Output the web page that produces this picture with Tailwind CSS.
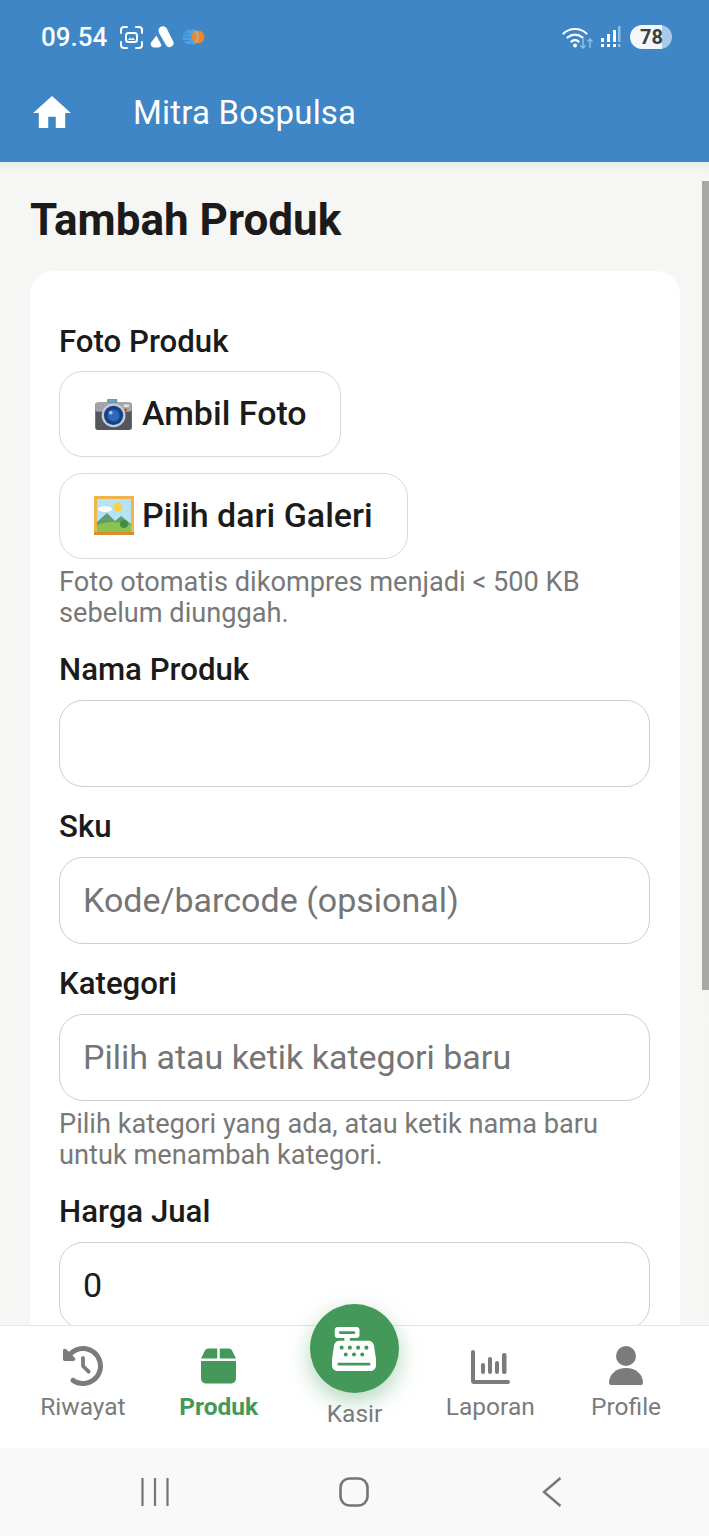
<!doctype html>
<html lang="id">
<head>
<meta charset="utf-8">
<script src="https://cdn.jsdelivr.net/npm/@tailwindcss/browser@4"></script>
<title>Tambah Produk</title>
</head>
<body class="m-0">
<div class="relative flex h-[1536px] w-[709px] flex-col overflow-hidden bg-[#f6f6f5] font-['Roboto',sans-serif] text-[#1b1b1b]">

  <!-- status + app bar -->
  <header class="h-[162px] shrink-0 bg-[#3e86c6] text-white">
    <div class="flex h-[74px] items-center justify-between pl-[41px] pr-[37px]">
      <div class="flex items-center">
        <span class="text-[26px] font-medium leading-none">09.54</span>
        <svg class="ml-[12px]" width="25" height="25" viewBox="0 0 25 25" fill="none" stroke="#fff" stroke-width="2" stroke-linecap="round"><path d="M2 8V5a3 3 0 0 1 3-3h3M17 2h3a3 3 0 0 1 3 3v3M23 17v3a3 3 0 0 1-3 3h-3M8 23H5a3 3 0 0 1-3-3v-3"/><rect x="7" y="8" width="11" height="9" rx="2.500" stroke-width="2"/><path d="M9 15l2-2.500 1.500 1.500 1.500-1.500 2 2.500z" fill="#fff" stroke="none"/></svg>
        <svg class="ml-[6px]" width="24" height="22" viewBox="0 0 24 22"><path d="M8.500 4.500a4.500 4.500 0 0 1 8-2.500l6.500 13a4 4 0 0 1-7 4l-7-12z" fill="#fff"/><path d="M6.500 9.500l5 9.500A3.500 3.500 0 0 1 8 21.500H4A3.500 3.500 0 0 1 1 16.500z" fill="#fff"/></svg>
        <svg class="ml-[8px]" width="23" height="16" viewBox="0 0 23 16"><circle cx="8" cy="8" r="7.500" fill="#4aa0e6"/><path d="M0 4.500h7M0 8h9M0 11.500h7" stroke="#3e86c6" stroke-width="1"/><circle cx="16" cy="8" r="6.500" fill="#e98a2b"/><path d="M10.500.8a8 8 0 0 1 0 14.400l1.500 0a8 8 0 0 0 0-14.400z" fill="#8fbde3"/></svg>
      </div>
      <div class="flex items-center">
        <svg width="31" height="24" viewBox="0 0 31 24" fill="none"><path d="M1.500 8.500a17 17 0 0 1 23 0M5.500 12.500a11.500 11.500 0 0 1 15 0M9.500 16.500a6 6 0 0 1 7 0" stroke="#fff" stroke-width="2.200" stroke-linecap="round"/><circle cx="13" cy="20.500" r="2" fill="#fff"/><path d="M21 14v9M18.500 20.500l2.500 2.500 2.500-2.500M28 23v-9M25.500 16.500l2.500-2.500 2.500 2.500" stroke="#8fbde3" stroke-width="1.500"/></svg>
        <svg class="ml-[7px]" width="21" height="24" viewBox="0 0 21 24" fill="#fff"><rect x="1" y="19" width="3" height="3"/><rect x="1" y="13" width="3" height="4"/><rect x="7" y="19" width="3" height="3"/><rect x="7" y="9" width="3" height="8"/><rect x="13" y="19" width="3" height="3"/><rect x="13" y="5" width="3" height="12"/><rect x="18" y="1" width="2.500" height="16" fill="#8fbde3"/><rect x="18" y="19" width="2.500" height="3" fill="#8fbde3"/></svg>
        <div class="relative ml-[9px] flex h-[24px] w-[42px] items-center overflow-hidden rounded-full bg-[#a9cbe8]">
          <div class="absolute inset-y-0 left-0 w-[32px] rounded-l-full bg-[#f3f6fa]"></div>
          <span class="relative pl-[10px] text-[20px] font-bold leading-none text-[#3a3f47]">78</span>
        </div>
      </div>
    </div>
    <div class="flex h-[76px] items-center pl-[33px]">
      <svg width="38" height="38" viewBox="2 2.500 20 18" fill="#fff" class="h-[34px] w-[38px]"><path d="M10 20v-6h4v6h5v-8h3L12 3 2 12h3v8z"/></svg>
      <span class="ml-[62px] text-[33px] leading-none tracking-[0.2px]">Mitra Bospulsa</span>
    </div>
  </header>

  <!-- scrollable content -->
  <main class="flex-1 overflow-hidden bg-gradient-to-b from-[#ececea] from-0% to-[#f6f6f5] to-[1%] pl-[30px] pr-[29px]">
    <h1 class="mt-[34px] text-[44px] font-bold leading-[48px]">Tambah Produk</h1>
    <section class="mt-[27px] rounded-[24px] bg-white pb-[40px] pl-[29px] pr-[30px] pt-[53px]">
      <label class="block text-[31.200px] font-medium leading-[35px]">Foto Produk</label>
      <button class="mt-[12px] flex h-[86px] w-[282px] items-center rounded-[24px] border border-[#d9d9d9] bg-white pb-[2px] pl-[33px] text-[34px] font-medium leading-none">
        <svg width="40" height="33" viewBox="0 0 41 36" class="mb-[-2px] ml-[1px] mr-[8px] shrink-0"><rect x="13" y="1" width="11" height="5" rx="1" fill="#7d8a96"/><rect x="15" y="2" width="7" height="2" fill="#4fb3e8"/><rect x="0" y="5" width="40" height="30" rx="3" fill="#55555c"/><rect x="0" y="5" width="40" height="10" rx="3" fill="#a3a3aa"/><rect x="31" y="7" width="6" height="3" fill="#dfe3e6"/><circle cx="33" cy="13" r="1.500" fill="#d33"/><circle cx="20" cy="19" r="13" fill="#c3ccd4"/><circle cx="20" cy="19" r="10.500" fill="#15428a"/><circle cx="20" cy="19" r="6.500" fill="#2d69b5"/><circle cx="17" cy="16" r="2" fill="#9cc4ef"/></svg>
        Ambil Foto
      </button>
      <button class="mt-[16px] flex h-[86px] w-[349px] items-center rounded-[24px] border border-[#d9d9d9] bg-white pb-[2px] pl-[33px] text-[34px] font-medium leading-none">
        <svg width="40" height="39" viewBox="0 0 40 39" class="mb-[-1px] ml-[1px] mr-[8px] shrink-0"><rect width="40" height="39" fill="#f1b44c"/><rect x="0" y="36" width="40" height="3" fill="#d68f2c"/><rect x="3" y="3" width="34" height="33" fill="#b5e2f5"/><circle cx="24" cy="11" r="4.500" fill="#f8d14a"/><ellipse cx="11" cy="13" rx="7" ry="3" fill="#fff"/><path d="M3 26l10-9 8 8 6-5 10 8v8H3z" fill="#5f9e6e"/><path d="M3 29c10-4 22-4 34 0v7H3z" fill="#8cc152"/><circle cx="30" cy="28" r="4" fill="#3f8f43"/></svg>
        Pilih dari Galeri
      </button>
      <p class="mt-[8px] text-[27.200px] leading-[31px] text-[#787878]">Foto otomatis dikompres menjadi &lt; 500 KB<br>sebelum diunggah.</p>

      <label class="mt-[23px] block text-[31.200px] font-medium leading-[35px]">Nama Produk</label>
      <div class="mt-[13px] h-[87px] rounded-[24px] border border-[#cfcfcf] bg-white"></div>

      <label class="mt-[22px] block text-[31.200px] font-medium leading-[35px]">Sku</label>
      <div class="mt-[13px] flex h-[87px] items-center rounded-[24px] border border-[#cfcfcf] bg-white pl-[23px] text-[34px] text-[#757575]">Kode/barcode (opsional)</div>

      <label class="mt-[22px] block text-[31.200px] font-medium leading-[35px]">Kategori</label>
      <div class="mt-[13px] flex h-[87px] items-center rounded-[24px] border border-[#cfcfcf] bg-white pl-[23px] text-[34px] text-[#757575]">Pilih atau ketik kategori baru</div>
      <p class="mt-[8px] text-[27.200px] leading-[31px] text-[#787878]">Pilih kategori yang ada, atau ketik nama baru<br>untuk menambah kategori.</p>

      <label class="mt-[23px] block text-[31.200px] font-medium leading-[35px]">Harga Jual</label>
      <div class="mt-[13px] flex h-[87px] items-center rounded-[24px] border border-[#cfcfcf] bg-white pl-[23px] text-[34px] text-[#1b1b1b]">0</div>
    </section>
  </main>

  <!-- scrollbar -->
  <div class="absolute right-0 top-[181px] h-[809px] w-[7px] bg-[#a8a8a6]"></div>

  <!-- bottom navigation -->
  <nav class="relative grid h-[123px] shrink-0 grid-cols-5 border-t border-[#e6e6e6] bg-white px-[15px] text-[24.500px] leading-none text-[#7b7b7b]">
    <a class="flex flex-col items-center pt-[20px]">
      <svg width="40" height="40" viewBox="0 0 512 512" fill="#7b7b7b"><path d="M75 75L41 41C25.900 25.900 0 36.600 0 57.900V168c0 13.300 10.700 24 24 24H134.100c21.400 0 32.100-25.900 17-41l-30.800-30.800C155 85.500 203 64 256 64c106 0 192 86 192 192s-86 192-192 192c-40.800 0-78.600-12.700-109.700-34.400c-14.500-10.100-34.400-6.600-44.600 7.900s-6.600 34.400 7.900 44.600C151.200 495 201.700 512 256 512c141.400 0 256-114.600 256-256S397.400 0 256 0C185.300 0 121.300 28.700 75 75zm181 53c-13.300 0-24 10.700-24 24V256c0 6.400 2.500 12.500 7 17l72 72c9.400 9.400 24.600 9.400 33.900 0s9.400-24.600 0-33.900l-65-65V152c0-13.300-10.700-24-24-24z"/></svg>
      <span class="mt-[9px]">Riwayat</span>
    </a>
    <a class="flex flex-col items-center pt-[20px] font-bold text-[#43985a]">
      <svg width="35" height="40" viewBox="0 0 448 512" fill="#43985a"><path d="M50.700 58.500L0 160H208V32H93.700C75.500 32 58.900 42.300 50.700 58.500zM240 160H448L397.300 58.500C389.100 42.300 372.500 32 354.300 32H240V160zm208 32H0V416c0 35.300 28.700 64 64 64H384c35.300 0 64-28.700 64-64V192z"/></svg>
      <span class="mt-[9px]">Produk</span>
    </a>
    <a class="relative flex flex-col items-center pt-[76px]">
      <span class="absolute top-[-22px] flex h-[89px] w-[89px] items-center justify-center rounded-full bg-[#43985a] shadow-[0_8px_22px_rgba(67,152,90,0.4)]">
        <svg width="44" height="44" viewBox="0 0 512 512" fill="#fff"><path d="M64 0C46.300 0 32 14.300 32 32V96c0 17.700 14.300 32 32 32h80v32H87c-31.600 0-58.500 23.100-63.300 54.400L1.100 364.100C.4 368.800 0 373.600 0 378.400V448c0 35.300 28.700 64 64 64H448c35.300 0 64-28.700 64-64V378.400c0-4.800-.4-9.600-1.100-14.400L488.200 214.400C483.500 183.100 456.600 160 425 160H208V128h80c17.700 0 32-14.300 32-32V32c0-17.700-14.300-32-32-32H64zM96 48H256c8.800 0 16 7.200 16 16s-7.200 16-16 16H96c-8.800 0-16-7.200-16-16s7.200-16 16-16zM64 432c0-8.800 7.200-16 16-16H432c8.800 0 16 7.200 16 16s-7.200 16-16 16H80c-8.800 0-16-7.200-16-16zm48-168a24 24 0 1 1 0-48 24 24 0 1 1 0 48zm120-24a24 24 0 1 1 -48 0 24 24 0 1 1 48 0zM160 344a24 24 0 1 1 0-48 24 24 0 1 1 0 48zM328 240a24 24 0 1 1 -48 0 24 24 0 1 1 48 0zM256 344a24 24 0 1 1 0-48 24 24 0 1 1 0 48zM424 240a24 24 0 1 1 -48 0 24 24 0 1 1 48 0zM352 344a24 24 0 1 1 0-48 24 24 0 1 1 0 48z"/></svg>
      </span>
      <span>Kasir</span>
    </a>
    <a class="flex flex-col items-center pt-[20px]">
      <svg width="39" height="40" viewBox="0 0 39 40" fill="#7b7b7b"><path d="M0 6a2 2 0 0 1 4 0v28h33a2 2 0 0 1 0 4H3a3 3 0 0 1-3-3z"/><rect x="10" y="17" width="4" height="11" rx="2"/><rect x="17" y="11" width="4" height="17" rx="2"/><rect x="24" y="15" width="4" height="13" rx="2"/><rect x="31" y="7" width="4.500" height="21" rx="2"/></svg>
      <span class="mt-[9px]">Laporan</span>
    </a>
    <a class="flex flex-col items-center pt-[20px]">
      <svg width="34" height="40" viewBox="0 0 34 40" fill="#7b7b7b"><circle cx="17" cy="10" r="10"/><path d="M0 37c0-9 7.500-15 17-15s17 6 17 15a2 2 0 0 1-2 2H2a2 2 0 0 1-2-2z"/></svg>
      <span class="mt-[9px]">Profile</span>
    </a>
  </nav>

  <!-- system navigation -->
  <div class="flex h-[88px] shrink-0 items-center bg-[#f9f9f9] pb-[1px] pl-[141px]">
    <svg width="28" height="30" viewBox="0 0 28 30" stroke="#757575" stroke-width="2.200"><path d="M1.500 1v28M14 1v28M26.500 1v28"/></svg>
    <svg class="ml-[170px]" width="30" height="30" viewBox="0 0 30 30" fill="none" stroke="#757575" stroke-width="2.600"><rect x="1.500" y="1.500" width="27" height="27" rx="9"/></svg>
    <svg class="ml-[173px]" width="20" height="30" viewBox="0 0 20 30" fill="none" stroke="#757575" stroke-width="2.400"><path d="M18.500 1 2 15l16.500 14"/></svg>
  </div>
</div>
</body>
</html>
